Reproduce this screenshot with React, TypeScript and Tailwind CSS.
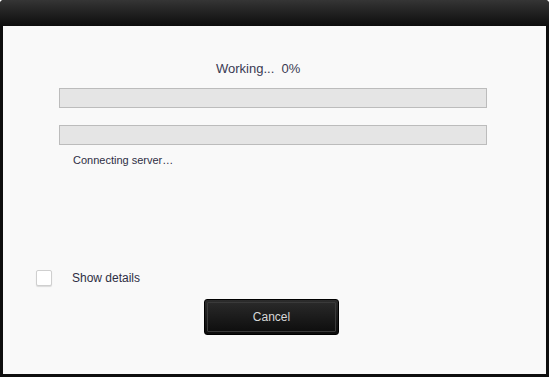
export default function App() {
  return (
    <div
      className="w-[549px] h-[377px] flex flex-col bg-[#0e0e0e] rounded-t-[4px] overflow-hidden"
      style={{ fontFamily: '"Liberation Sans", Arial, sans-serif' }}
    >
      <div className="h-[26px] shrink-0 bg-gradient-to-b from-[#353535] to-[#0e0e0e]" />
      <div className="flex-1 mx-[3px] mb-[3px] bg-[#f9f9f9] flex flex-col">
        <div className="h-[35px]" />
        <div className="ml-[213px] text-[13px] leading-[15px] text-[#3a3a52]">Working...&nbsp;&nbsp;0%</div>
        <div className="h-[12px]" />
        <div className="ml-[56px] w-[428px] h-[20px] bg-[#e5e5e5] border border-[#bcbcbc]" />
        <div className="h-[17px]" />
        <div className="ml-[56px] w-[428px] h-[20px] bg-[#e5e5e5] border border-[#bcbcbc]" />
        <div className="ml-[70px] mt-[9px] text-[11px] leading-[13px] text-[#2e2e44]">Connecting server…</div>
        <div className="h-[103px]" />
        <div className="flex items-center h-[16px]">
          <div className="ml-[33px] w-[16px] h-[16px] bg-white border border-[#cfcfcf] rounded-[2px] shadow-[0_1px_1px_rgba(0,0,0,0.12)]" />
          <div className="ml-[20px] text-[12px] leading-[14px] text-[#2e2e44]">Show details</div>
        </div>
        <div className="h-[13px]" />
        <div className="flex">
          <button className="ml-[201px] w-[135px] h-[36px] rounded-[3px] border border-black bg-gradient-to-b from-[#2c2c2c] to-[#0c0c0c] p-[2px]">
            <div className="w-full h-full border border-[#3a3a3a] rounded-[1px] flex items-center justify-center text-[12px] text-[#d8d8d8]">
              Cancel
            </div>
          </button>
        </div>
      </div>
    </div>
  );
}
